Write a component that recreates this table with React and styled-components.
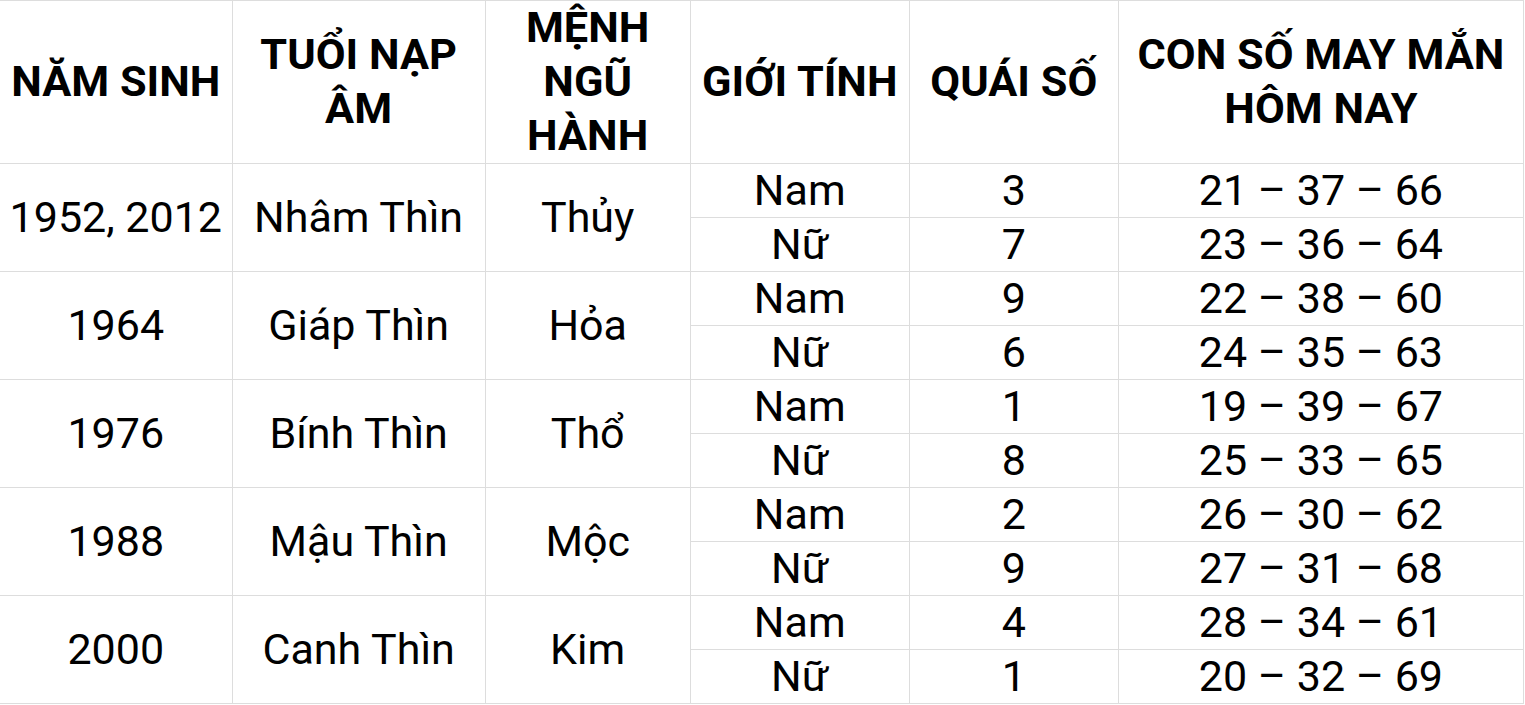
import React from "react";
import styled, { createGlobalStyle } from "styled-components";

const GlobalStyle = createGlobalStyle`
  html, body {
    margin: 0;
    padding: 0;
    background: #fff;
  }
  body {
    font-family: Roboto, "Noto Sans", Arial, sans-serif;
    color: #000;
  }
`;

const Table = styled.table`
  width: 1524px;
  table-layout: fixed;
  border-collapse: collapse;
  border-top: 1px solid #dddddd;
`;

const HeadCell = styled.th`
  height: 162px;
  padding: 0 4px;
  border: 1px solid #dddddd;
  border-top: none;
  font-size: 43.3px;
  line-height: 54px;
  font-weight: 700;
  text-align: center;
  vertical-align: middle;
  &:first-child {
    border-left: none;
  }
`;

const Cell = styled.td`
  height: 53px;
  padding: 0;
  border: 1px solid #dddddd;
  font-size: 43px;
  line-height: 53px;
  font-weight: 400;
  text-align: center;
  vertical-align: middle;
  white-space: nowrap;
  border-left: ${(p) => (p.$first ? "none" : "1px solid #dddddd")};
`;

const columns = [232, 253, 205, 219, 209, 405];

const headers = [
  "NĂM SINH",
  "TUỔI NẠP ÂM",
  "MỆNH NGŨ HÀNH",
  "GIỚI TÍNH",
  "QUÁI SỐ",
  "CON SỐ MAY MẮN HÔM NAY",
];

const rows = [
  {
    year: "1952, 2012",
    tuoi: "Nhâm Thìn",
    menh: "Thủy",
    nam: ["3", "21 – 37 – 66"],
    nu: ["7", "23 – 36 – 64"],
  },
  {
    year: "1964",
    tuoi: "Giáp Thìn",
    menh: "Hỏa",
    nam: ["9", "22 – 38 – 60"],
    nu: ["6", "24 – 35 – 63"],
  },
  {
    year: "1976",
    tuoi: "Bính Thìn",
    menh: "Thổ",
    nam: ["1", "19 – 39 – 67"],
    nu: ["8", "25 – 33 – 65"],
  },
  {
    year: "1988",
    tuoi: "Mậu Thìn",
    menh: "Mộc",
    nam: ["2", "26 – 30 – 62"],
    nu: ["9", "27 – 31 – 68"],
  },
  {
    year: "2000",
    tuoi: "Canh Thìn",
    menh: "Kim",
    nam: ["4", "28 – 34 – 61"],
    nu: ["1", "20 – 32 – 69"],
  },
];

export default function App() {
  return (
    <>
      <GlobalStyle />
      <Table>
        <colgroup>
          {columns.map((w, i) => (
            <col key={i} style={{ width: w }} />
          ))}
        </colgroup>
        <thead>
          <tr>
            {headers.map((h) => (
              <HeadCell key={h}>{h}</HeadCell>
            ))}
          </tr>
        </thead>
        <tbody>
          {rows.map((r) => (
            <React.Fragment key={r.year}>
              <tr>
                <Cell $first rowSpan={2}>
                  {r.year}
                </Cell>
                <Cell rowSpan={2}>{r.tuoi}</Cell>
                <Cell rowSpan={2}>{r.menh}</Cell>
                <Cell>Nam</Cell>
                <Cell>{r.nam[0]}</Cell>
                <Cell>{r.nam[1]}</Cell>
              </tr>
              <tr>
                <Cell>Nữ</Cell>
                <Cell>{r.nu[0]}</Cell>
                <Cell>{r.nu[1]}</Cell>
              </tr>
            </React.Fragment>
          ))}
        </tbody>
      </Table>
    </>
  );
}
